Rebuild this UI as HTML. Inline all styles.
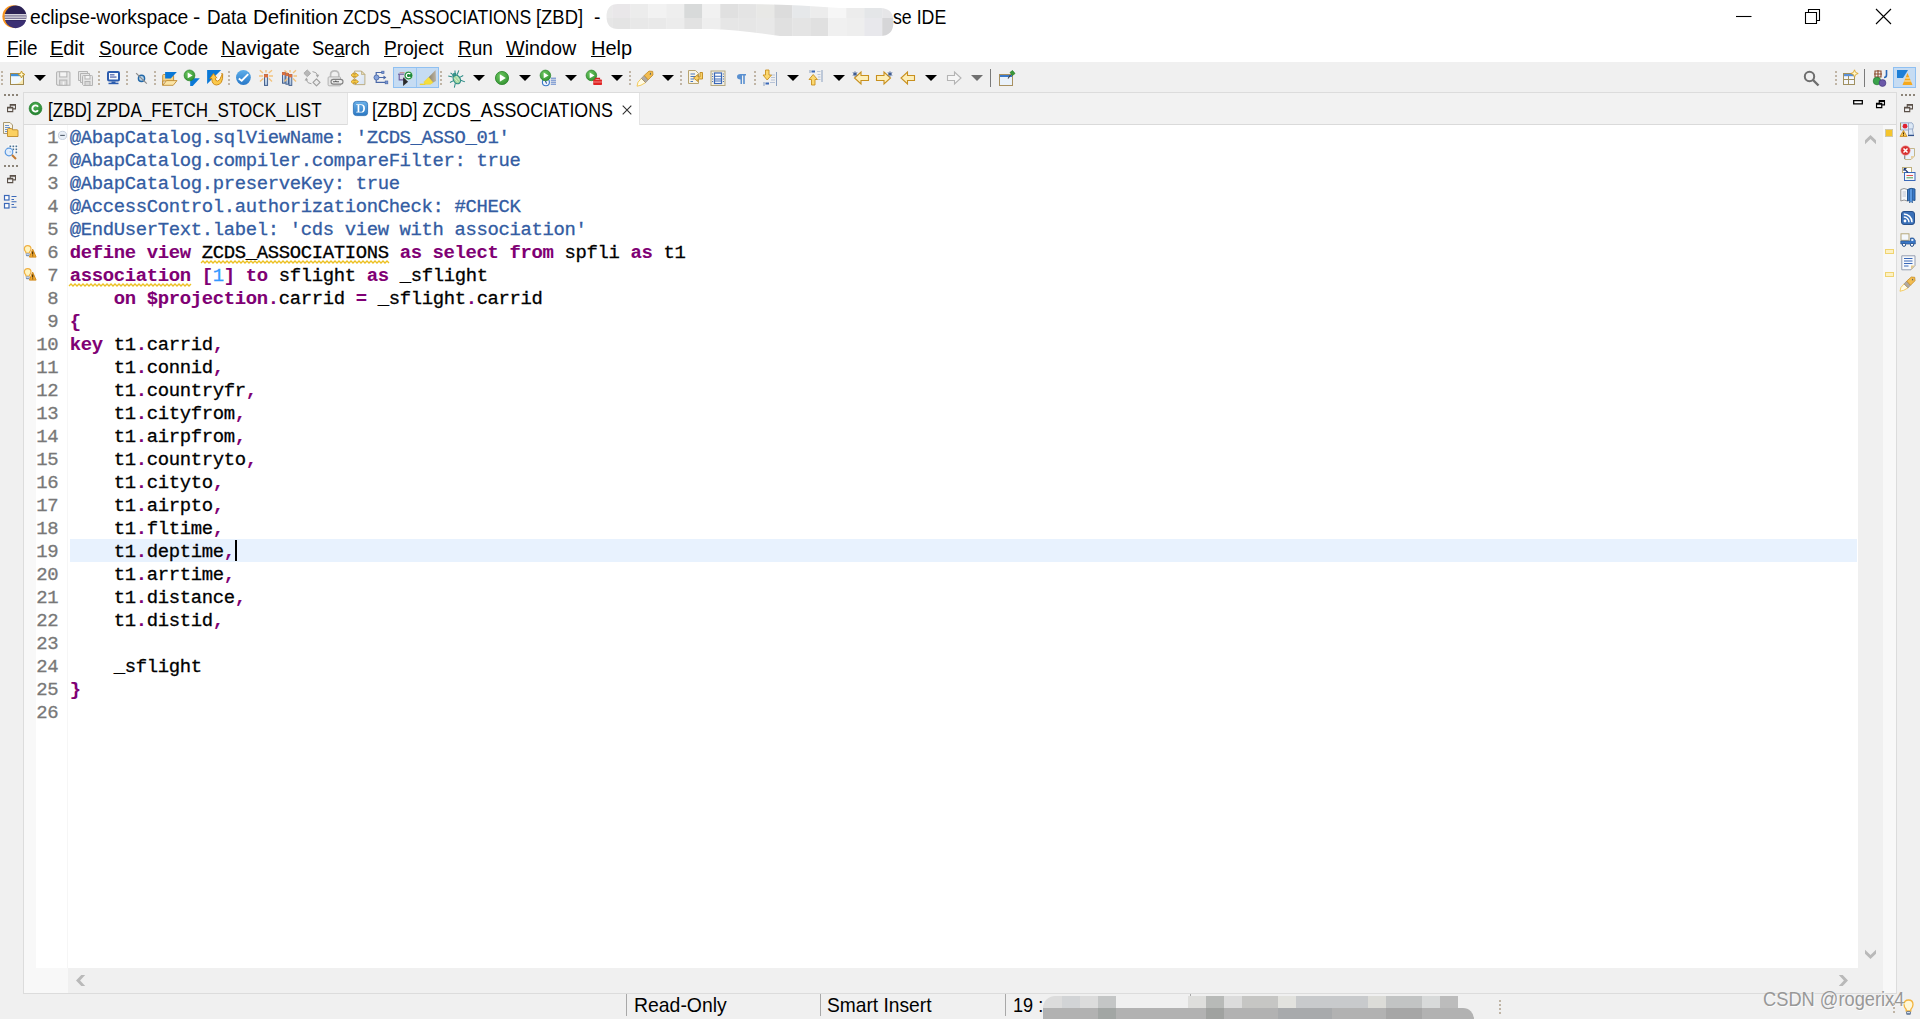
<!DOCTYPE html>
<html>
<head>
<meta charset="utf-8">
<title>eclipse-workspace</title>
<style>
html,body{margin:0;padding:0;}
body{width:1920px;height:1019px;overflow:hidden;background:#f0f0f0;position:relative;font-family:"Liberation Sans",sans-serif;color:#000;}
.abs{position:absolute;}
#titlebar{left:0;top:0;width:1920px;height:32px;background:#fff;}
#menubar{left:0;top:32px;width:1920px;height:30px;background:#fff;}
.ui{position:absolute;white-space:pre;font-size:20.4px;line-height:22px;height:22px;color:#000;transform-origin:0 50%;display:inline-block;}
.ui u{text-decoration:underline;text-decoration-thickness:1px;text-underline-offset:0.5px;}
#toolbar{left:0;top:62px;width:1920px;height:30px;background:#f0f0f0;}
#part{left:23px;top:92px;width:1874px;height:902px;background:#f2f2f2;border:1px solid #dcdcdc;box-sizing:border-box;}
#editor{left:24px;top:125px;width:1834px;height:843px;background:#fff;}
#tabline{left:24px;top:124px;width:1872px;height:1px;background:#dadada;}
#annot{left:24px;top:125px;width:12px;height:868px;background:#f8f8f8;}
#acttab{left:347px;top:93px;width:293px;height:32px;background:#fff;border-left:1px solid #e4e4e4;border-right:1px solid #e4e4e4;box-sizing:border-box;}
#lnsep{left:67px;top:125px;width:1px;height:843px;background:#f6f6f6;}
#curline{left:70px;top:539px;width:1787px;height:23px;background:#e8f2fe;}
#caret{left:235px;top:540px;width:2px;height:21px;background:#000;}
#vscroll{left:1858px;top:125px;width:25px;height:843px;background:#f0f0f0;}
#ovr{left:1883px;top:125px;width:13px;height:868px;background:#f8f8f8;}
#hscroll{left:68px;top:968px;width:1815px;height:25px;background:#f0f0f0;}
#hsl{left:36px;top:968px;width:32px;height:25px;background:#f8f8f8;}
.code{position:absolute;left:69.8px;top:127px;margin:0;font-family:"Liberation Mono",monospace;font-size:18.9px;letter-spacing:-0.342px;line-height:23px;white-space:pre;color:#000;-webkit-text-stroke:0.3px currentColor;}
.ln{position:absolute;left:30px;width:28.3px;top:127px;margin:0;text-align:right;font-family:"Liberation Mono",monospace;font-size:18.9px;letter-spacing:-0.342px;line-height:23px;white-space:pre;color:#787878;-webkit-text-stroke:0.3px currentColor;}
.an{color:#335ca2;}
.kw{color:#7f0074;font-weight:bold;-webkit-text-stroke:0.1px currentColor;}
.nu{color:#3399ff;}
.ic{position:absolute;display:block;overflow:visible;}
.dd{position:absolute;top:75px;width:0;height:0;border-left:6px solid transparent;border-right:6px solid transparent;border-top:6.5px solid #000;}
.hd{position:absolute;top:71px;width:2px;height:15px;background:repeating-linear-gradient(to bottom,#c0b5a6 0,#c0b5a6 2px,transparent 2px,transparent 4px);}
.hh{position:absolute;height:2px;width:15px;background:repeating-linear-gradient(to right,#8c8478 0,#8c8478 2px,transparent 2px,transparent 4px);}
/*FIT*/
#t1a{left:30.45px !important;transform:scaleX(0.9435);}
#t1b{left:193.20px !important;transform:scaleX(1.0740);}
#t1c{left:206.72px !important;transform:scaleX(0.9227);}
#t1d{left:252.67px !important;transform:scaleX(1.0005);}
#t1e{left:342.70px !important;transform:scaleX(0.8622);}
#t1f{left:535.93px !important;transform:scaleX(0.9028);}
#t1g{left:594.45px !important;transform:scaleX(0.9416);}
#t2{left:892.70px !important;transform:scaleX(0.8699);}
#m1{left:7.05px !important;transform:scaleX(0.9255);}
#m2{left:50.13px !important;transform:scaleX(0.9764);}
#m3{left:98.69px !important;transform:scaleX(0.9159);}
#m4{left:221.19px !important;transform:scaleX(0.9785);}
#m5{left:312.44px !important;transform:scaleX(0.8978);}
#m6{left:384.26px !important;transform:scaleX(0.9400);}
#m7{left:458.22px !important;transform:scaleX(0.9281);}
#m8{left:506.21px !important;transform:scaleX(0.9685);}
#m9{left:591.14px !important;transform:scaleX(0.9786);}
#tab1{left:47.95px !important;transform:scaleX(0.8364);}
#tab2{left:371.95px !important;transform:scaleX(0.8727);}
#s1{left:634.42px !important;transform:scaleX(0.9516);}
#s2{left:827.21px !important;transform:scaleX(0.9411);}
#s3{left:1013.25px !important;transform:scaleX(0.8878);}
#wm{left:1762.85px !important;transform:scaleX(0.9135);}
/*ENDFIT*/
</style>
</head>
<body>
<div id="titlebar" class="abs"></div>
<div id="menubar" class="abs"></div>
<div id="toolbar" class="abs"></div>
<div id="part" class="abs"></div>
<div id="editor" class="abs"></div>
<div id="tabline" class="abs"></div>
<div id="acttab" class="abs"></div>
<div id="annot" class="abs"></div>
<div id="lnsep" class="abs"></div>
<div id="curline" class="abs"></div>
<div id="vscroll" class="abs"></div>
<div id="ovr" class="abs"></div>
<div id="hscroll" class="abs"></div>
<div id="hsl" class="abs"></div>

<!--I1-->
<!-- TITLE ICON + CONTROLS -->
<svg class="ic" style="left:1px;top:4px;" width="27" height="25" viewBox="0 0 27 25">
  <circle cx="12.6" cy="12.5" r="11.2" fill="#f7941e"/>
  <circle cx="14.6" cy="12.5" r="10.9" fill="#2c2255"/>
  <rect x="3.6" y="10.2" width="21.8" height="1.3" fill="#fff"/>
  <rect x="3.6" y="12.4" width="21.8" height="1.3" fill="#fff"/>
  <rect x="3.8" y="14.6" width="21.6" height="1.3" fill="#fff"/>
  <path d="M4.2 16.6 H25 A10.9 10.9 0 0 1 4.2 16.6Z" fill="#3b2f73"/>
</svg>
<svg class="ic" style="left:590px;top:0px;" width="310" height="40" viewBox="0 0 310 40">
  <defs><clipPath id="blobc"><path d="M28 4 H154 Q200 4 250 8 H290 Q303.500 8 303.500 22 Q303.500 36 290 36 H190 Q150 30 120 29 H28 Q16.500 29 16.500 16.500 Q16.500 4 28 4Z"/></clipPath></defs>
  <g clip-path="url(#blobc)"><rect x="4.2" y="0" width="18.2" height="18" fill="#eaeaea"/><rect x="4.2" y="18" width="18.2" height="20" fill="#e6e6e6"/><rect x="22.2" y="0" width="18.2" height="18" fill="#e9e7e9"/><rect x="22.2" y="18" width="18.2" height="20" fill="#e4e4e4"/><rect x="40.2" y="0" width="18.2" height="18" fill="#ececec"/><rect x="40.2" y="18" width="18.2" height="20" fill="#e8e8e8"/><rect x="58.2" y="0" width="18.2" height="18" fill="#f2f2f2"/><rect x="58.2" y="18" width="18.2" height="20" fill="#e9e9e9"/><rect x="76.2" y="0" width="18.2" height="18" fill="#eeeeee"/><rect x="76.2" y="18" width="18.2" height="20" fill="#ececec"/><rect x="94.2" y="0" width="18.2" height="18" fill="#d8dada"/><rect x="94.2" y="18" width="18.2" height="20" fill="#e2e2e2"/><rect x="112.2" y="0" width="18.2" height="18" fill="#f1f1f1"/><rect x="112.2" y="18" width="18.2" height="20" fill="#eeeeee"/><rect x="130.2" y="0" width="18.2" height="18" fill="#e0e0e0"/><rect x="130.2" y="18" width="18.2" height="20" fill="#e6e6e6"/><rect x="148.2" y="0" width="18.2" height="18" fill="#e4e4e4"/><rect x="148.2" y="18" width="18.2" height="20" fill="#e6e6e6"/><rect x="166.2" y="0" width="18.2" height="18" fill="#e8e8e6"/><rect x="166.2" y="18" width="18.2" height="20" fill="#e8e8e8"/><rect x="184.2" y="0" width="18.2" height="18" fill="#dcdcdc"/><rect x="184.2" y="18" width="18.2" height="20" fill="#e0e0e0"/><rect x="202.2" y="0" width="18.2" height="18" fill="#e6e8ea"/><rect x="202.2" y="18" width="18.2" height="20" fill="#e4e4e4"/><rect x="220.2" y="0" width="18.2" height="18" fill="#ececec"/><rect x="220.2" y="18" width="18.2" height="20" fill="#e0e0e0"/><rect x="238.2" y="0" width="18.2" height="18" fill="#f6f6f6"/><rect x="238.2" y="18" width="18.2" height="20" fill="#f0f0f0"/><rect x="256.2" y="0" width="18.2" height="18" fill="#ececec"/><rect x="256.2" y="18" width="18.2" height="20" fill="#eeeeee"/><rect x="274.2" y="0" width="18.2" height="18" fill="#e4e6e8"/><rect x="274.2" y="18" width="18.2" height="20" fill="#e8e8ec"/><rect x="292.2" y="0" width="18.2" height="18" fill="#e6e6e8"/><rect x="292.2" y="18" width="18.2" height="20" fill="#d6d6d8"/></g>
</svg>
<svg class="ic" style="left:1730px;top:4px;" width="170" height="24" viewBox="0 0 170 24" fill="none" stroke="#000" stroke-width="1.1">
  <path d="M6 12.5 H21.5"/>
  <path d="M75.5 8.5 H86.5 V19.5 H75.5Z M78.5 8.5 V5.5 H89.5 V16.5 H86.5"/>
  <path d="M146 5 L161 20 M161 5 L146 20"/>
</svg>
<!--/I1-->
<!--I2-->
<!-- TOOLBAR ICONS -->
<div class="hd" style="left:1px"></div>
<svg class="ic" style="left:9px;top:70px;" width="16" height="16" viewBox="0 0 16 16">
  <rect x="1.5" y="3.5" width="13" height="11" fill="#f0f8fe" stroke="#a08a50"/>
  <rect x="2" y="4" width="12" height="2.2" fill="#3f8fd8"/>
  <path d="M5 14 Q12.5 13.5 14 8 V14Z" fill="#f8e8b0"/>
  <path d="M12.5 1 L13.6 3.4 L16 4.5 L13.6 5.6 L12.5 8 L11.4 5.6 L9 4.5 L11.4 3.4Z" fill="#fff6c8" stroke="#c89820" stroke-width=".9"/>
</svg>
<div class="dd" style="left:34px"></div>
<svg class="ic" style="left:54.5px;top:70px;" width="16.5" height="17" viewBox="0 0 16 16" fill="none" stroke="#b4b4b4">
  <path d="M1.5 2.5 Q1.5 1.5 2.5 1.5 H13.5 Q14.5 1.5 14.5 2.5 V14.5 H2.5 L1.5 13.5Z" fill="#e6e6e6"/>
  <rect x="4.5" y="1.5" width="7" height="5" fill="#f4f4f4"/>
  <rect x="4.5" y="9.5" width="7" height="5" fill="#d8d8d8"/>
  <rect x="7.5" y="11" width="1.5" height="3" fill="#f4f4f4" stroke="none"/>
</svg>
<svg class="ic" style="left:77px;top:70px;" width="17" height="17" viewBox="0 0 17 17" fill="#e6e6e6" stroke="#b4b4b4">
  <path d="M1.5 1.5 H10.5 V10.5 H1.5Z"/>
  <path d="M3.5 3.5 H12.5 V12.5 H3.5Z"/>
  <path d="M5.5 6.5 Q5.5 5.5 6.5 5.5 H14.5 Q15.5 5.5 15.5 6.5 V15.5 H6.5 L5.5 14.5Z"/>
  <rect x="8" y="5.5" width="5" height="3.5" fill="#f4f4f4"/>
  <rect x="8" y="11.5" width="5" height="4" fill="#d8d8d8"/>
</svg>
<div class="hd" style="left:98px"></div>
<svg class="ic" style="left:106px;top:70px;" width="16" height="16" viewBox="0 0 16 16">
  <rect x="2" y="2" width="11" height="8.6" rx="1" fill="#f6f9fd" stroke="#2c5cae" stroke-width="2"/>
  <rect x="4" y="4.3" width="4.5" height="1.1" fill="#3a50a0"/>
  <rect x="4" y="6.5" width="6.5" height="1.1" fill="#3a50a0"/>
  <rect x="5.5" y="11.5" width="4" height="1.5" fill="#2c5cae"/>
  <rect x="2.5" y="12.7" width="10" height="1.5" fill="#2c5cae"/>
</svg>
<div class="hd" style="left:126px"></div>
<svg class="ic" style="left:134px;top:70px;" width="16" height="16" viewBox="0 0 16 16" fill="none">
  <circle cx="7.5" cy="8.4" r="3.1" stroke="#2268a8" stroke-width="1.4" fill="#b9d4ea"/>
  <path d="M2.1 3.1 L12.8 13.6" stroke="#8c8c8c" stroke-width="1.2"/>
</svg>
<div class="hd" style="left:154px"></div>
<svg class="ic" style="left:162px;top:70px;" width="16" height="16" viewBox="0 0 16 16">
  <path d="M0.7 15.3 V5.4 Q0.7 4.5 1.6 4.5 H5 L6 5.6 H11.6 V11 H0.7Z" fill="#f7d58a" stroke="#c08a30" stroke-width=".9"/>
  <path d="M3.1 2.1 H14.9 L8.7 8.6 H3.1Z" fill="#0a78d6"/>
  <path d="M0.8 15.3 L4.5 10.6 H15 L11.2 15.3Z" fill="#fbe4a6" stroke="#c08a30" stroke-width=".9"/>
</svg>
<svg class="ic" style="left:183px;top:69px;" width="18" height="18" viewBox="0 0 18 18">
  <defs><radialGradient id="gp1" cx=".4" cy=".35" r=".8"><stop offset="0" stop-color="#6cc860"/><stop offset="1" stop-color="#2a8a2a"/></radialGradient></defs>
  <path d="M7.2 9.2 H16.8 L9.7 17 H7.2Z" fill="#0a78d6"/>
  <circle cx="6.5" cy="6.4" r="5.4" fill="url(#gp1)" stroke="#2a842a" stroke-width=".7"/>
  <path d="M4.7 3.5 L9.6 6.4 L4.7 9.3Z" fill="#fff"/>
</svg>
<svg class="ic" style="left:206px;top:69px;" width="18" height="18" viewBox="0 0 18 18">
  <path d="M1.1 1.1 H15.1 L1.1 15Z" fill="#0a78d6"/>
  <path d="M3.8 9.6 L7.5 4.6 L11.2 9.6 H9.3 Q9.4 12 11.5 12 Q14.8 11.5 15.6 4.6 L16.7 4.8 Q17.3 15.8 10.5 16 Q5.8 15.8 5.8 9.6Z" fill="#fbc94a" stroke="#c8820e" stroke-width=".9"/>
  <path d="M10.2 9.4 L11.6 10.5 L15.2 5" fill="none" stroke="#fff" stroke-width="1.2"/>
</svg>
<div class="hd" style="left:228px"></div>
<svg class="ic" style="left:236px;top:70px;" width="16" height="16" viewBox="0 0 16 16">
  <defs><linearGradient id="gc1" x1="0" y1="0" x2="0" y2="1"><stop offset="0" stop-color="#5eaeea"/><stop offset="1" stop-color="#2878c8"/></linearGradient></defs>
  <circle cx="7.4" cy="7.5" r="7.4" fill="url(#gc1)"/>
  <path d="M2.8 8.4 L5.7 10.7 L12.2 4.2" fill="none" stroke="#fff" stroke-width="1.9"/>
</svg>
<svg class="ic" style="left:258px;top:69px;" width="16" height="18" viewBox="0 0 16 18">
  <defs><linearGradient id="gw1" x1="0" y1="0" x2="0" y2="1"><stop offset="0" stop-color="#e8eef6"/><stop offset="1" stop-color="#a8c0dc"/></linearGradient></defs>
  <g stroke="#f2c27c" stroke-width="1.4"><path d="M8 1 V3.6 M1.8 1.3 L5 4 M14 1.3 L10.8 4 M1 7 H5 M11 7 H15 M2 12.5 L5.3 9.5 M14 12.5 L11 9.5"/></g>
  <rect x="6.5" y="5.6" width="3.1" height="10.8" fill="url(#gw1)" stroke="#3a5888" stroke-width=".9"/>
  <rect x="6.1" y="5.2" width="3.9" height="3.2" fill="#e0703a"/>
</svg>
<svg class="ic" style="left:281px;top:69px;" width="17" height="18" viewBox="0 0 17 18">
  <g stroke="#f2c27c" stroke-width="1.4"><path d="M9 1 V3.6 M3.5 1.5 L6.5 4 M15 1.3 L12 4 M12.500 7 H16 M15 12.500 L12 9.500"/></g>
  <rect x="1.5" y="3.5" width="2.6" height="10.7" fill="url(#gw1)" stroke="#3a5888" stroke-width=".9"/><rect x="1.1" y="3.1" width="3.4" height="3" fill="#e0703a"/>
  <rect x="4.900" y="4.500" width="2.6" height="10.700" fill="url(#gw1)" stroke="#3a5888" stroke-width=".9"/><rect x="4.500" y="4.100" width="3.4" height="3" fill="#e0703a"/>
  <rect x="8" y="5.600" width="2.8" height="10.800" fill="url(#gw1)" stroke="#3a5888" stroke-width=".9"/><rect x="7.600" y="5.200" width="3.6" height="3.200" fill="#e0703a"/>
  <path d="M3.500 12.500 L6.500 9.500" stroke="#f2c27c" stroke-width="1.4"/>
</svg>
<svg class="ic" style="left:303px;top:69px;" width="18" height="18" viewBox="0 0 18 18" fill="none" stroke="#a4a4a4">
  <path d="M4.250 1 L7.600 4.300 L4.250 7.600 L0.900 4.300Z" fill="#b8b8b8" stroke="#a8a8a8" stroke-linejoin="round"/>
  <path d="M13.500 9.900 L17 13.400 L13.500 16.900 L10 13.400Z" fill="#ececec" stroke="#a0a0a0" stroke-width="1.200" stroke-linejoin="round"/>
  <path d="M9.500 2.600 Q13.800 3 14.500 6.200" stroke-width="1"/>
  <path d="M12.700 5.800 H16.300 L14.500 8.800Z" fill="#a4a4a4" stroke="none"/>
  <path d="M8.500 14.800 Q4.200 14.400 3.400 11.200" stroke-width="1"/>
  <path d="M1.600 11.500 H5.200 L3.400 8.500Z" fill="#a4a4a4" stroke="none"/>
</svg>
<svg class="ic" style="left:327px;top:69px;" width="17" height="18" viewBox="0 0 17 18" fill="none">
  <path d="M3.600 8 V5.600 Q3.600 1.900 7.700 1.900 Q11.800 1.900 11.800 5.600 V8" stroke="#bcbcbc" stroke-width="1.700"/>
  <rect x="1.100" y="7.900" width="12.500" height="8.900" rx="1" fill="#e6e6e6" stroke="#b2b2b2"/>
  <rect x="4" y="10.400" width="12" height="4.700" rx="2.300" fill="#ededed" stroke="#808080" stroke-width="1.100"/>
  <path d="M6 12.800 H8 L8.800 12 L9.600 12.800 H12" stroke="#606060" stroke-width="1.100"/>
</svg>
<svg class="ic" style="left:350px;top:70px;" width="16" height="16" viewBox="0 0 16 16">
  <defs><linearGradient id="gd1" x1="0" y1="0" x2="1" y2="1"><stop offset="0" stop-color="#f4f8fd"/><stop offset="1" stop-color="#d6e2f2"/></linearGradient></defs>
  <path d="M4.500 1.100 H11.500 L14.900 4.500 V14.600 H4.500Z" fill="url(#gd1)" stroke="#b8a878" stroke-width=".9"/>
  <path d="M11.500 1.100 V4.500 H14.900Z" fill="#e8dcb8" stroke="#b8a878" stroke-width=".7"/>
  <path d="M1 5.200 L3.500 2.800 V4.200 H5.500 V2.800 L8.500 5.200 L5.500 7.600 V6.200 H3.500 V7.600Z" fill="#f6cc48" stroke="#c89018" stroke-width=".8" stroke-linejoin="round"/>
  <path d="M1 11.700 L3.500 9.300 V10.700 H5.500 V9.300 L8.500 11.700 L5.500 14.100 V12.700 H3.500 V14.100Z" fill="#f6cc48" stroke="#c89018" stroke-width=".8" stroke-linejoin="round"/>
</svg>
<svg class="ic" style="left:373px;top:70px;" width="16" height="16" viewBox="0 0 16 16" fill="none" stroke="#4a68a8" stroke-width="1.2">
  <path d="M3.2 5 V2.5 H9 M3.2 10 V12.3 H12.5 M6 7.5 H11"/>
  <path d="M10.5 5.4 L13.4 7.5 L10.5 9.6Z" fill="#4a68a8" stroke="none"/>
  <circle cx="3.5" cy="7.5" r="2.5" fill="#86a4dc" stroke="#4a68a8" stroke-width=".9"/>
  <rect x="8.7" y="1.2" width="2.3" height="2.4" fill="#7a98d4" stroke="#4a68a8" stroke-width=".7"/>
  <rect x="12.2" y="11" width="2.6" height="2.8" fill="#7a98d4" stroke="#4a68a8" stroke-width=".7"/>
</svg>
<div class="abs" style="left:393px;top:67px;width:46px;height:21px;background:#c6dcf3;border:1px solid #8fc0f2;box-sizing:border-box;"></div>
<div class="abs" style="left:415.5px;top:68px;width:1px;height:19px;background:#9ac6f2;"></div>
<svg class="ic" style="left:397px;top:70px;" width="17" height="17" viewBox="0 0 17 17">
  <path d="M2.2 4.2 V9.9 H8 V4.2" fill="#d8d4ea" stroke="#6a5a9a" stroke-width="1.1"/>
  <path d="M1 4.2 H9.2" stroke="#6a5a9a" stroke-width="1.1"/>
  <path d="M2.6 2.7 H7.6" stroke="#c48a8a" stroke-width="1.1"/>
  <path d="M6.1 7.2 V16 L11.1 11.7Z" fill="#2c2c2c"/>
  <circle cx="11.5" cy="5.5" r="4.3" fill="#1e8a3a" stroke="#e4f2e4" stroke-width=".6"/>
  <path d="M13.3 4.2 A2.2 2.2 0 1 0 13.3 6.8" fill="none" stroke="#fff" stroke-width="1.3"/>
</svg>
<svg class="ic" style="left:419px;top:69px;" width="18" height="18" viewBox="0 0 18 18">
  <defs><linearGradient id="gh1" x1="0" y1="0" x2="1" y2="0"><stop offset="0" stop-color="#8e866e"/><stop offset="1" stop-color="#bab2a2"/></linearGradient></defs>
  <path d="M16.6 1 L9.6 8.2 L13.6 13.8 L17 12Z" fill="url(#gh1)"/>
  <path d="M9.6 8.2 L14 13.6 L11.3 15.3 H5.9 L4.9 12.9Z" fill="#f6de3c" stroke="#ecd030" stroke-width=".5"/>
  <path d="M0.8 15.3 H6.2" stroke="#f0d428" stroke-width="1.3"/>
</svg>
<div class="hd" style="left:440px"></div>
<svg class="ic" style="left:448px;top:70px;" width="17" height="17" viewBox="0 0 17 17" fill="none" stroke="#2a8a84" stroke-width="1">
  <g transform="rotate(-28 8.5 8.8)">
  <path d="M6 5.5 L2.5 2.5 M11 5.5 L14.500 2.500 M5 9 H1 M12 9 H16 M5.500 12 L2.500 15.500 M11.500 12 L14.500 15.500 M7 3 L6 0.800 M10 3 L11 0.800"/>
  <ellipse cx="8.5" cy="9.5" rx="3.4" ry="4.6" fill="#a6d8a2" stroke="#2a8a84" stroke-width="1.1"/>
  <path d="M7 7 L8 12 M9.500 6.500 L10.300 11.500" stroke="#d8f0d0" stroke-width=".8"/>
  <ellipse cx="8.500" cy="4.200" rx="1.800" ry="1.300" fill="#3a9a8a" stroke="#2a8a84"/>
  </g>
</svg>
<div class="dd" style="left:473px"></div>
<svg class="ic" style="left:494px;top:70px;" width="16" height="16" viewBox="0 0 16 16">
  <circle cx="8" cy="8" r="6.600" fill="url(#gp1)" stroke="#2a842a" stroke-width=".8"/>
  <path d="M5.800 4.200 L11.800 8 L5.800 11.800Z" fill="#fff"/>
</svg>
<div class="dd" style="left:519px"></div>
<svg class="ic" style="left:540px;top:70px;" width="17" height="18" viewBox="0 0 17 18">
  <circle cx="5.9" cy="12.3" r="3.5" fill="#f2f7fd" stroke="#3a78c8" stroke-width="1.1"/>
  <path d="M5.4 10.8 L6.6 13.6" stroke="#2a50a0" fill="none" stroke-width="1.1"/>
  <path d="M10.8 8.2 H16 M10.8 10.2 H16 M10.8 12.2 H16 M10.8 14.2 H16" stroke="#5a80c8" stroke-width="1"/>
  <circle cx="5.4" cy="5.400" r="5.300" fill="url(#gp1)" stroke="#2a842a" stroke-width=".7"/>
  <path d="M3.700 2.600 L8.500 5.400 L3.700 8.200Z" fill="#fff"/>
</svg>
<div class="dd" style="left:565px"></div>
<svg class="ic" style="left:586px;top:70px;" width="17" height="18" viewBox="0 0 17 18">
  <circle cx="5.4" cy="5.400" r="5.300" fill="url(#gp1)" stroke="#2a842a" stroke-width=".7"/>
  <path d="M3.700 2.600 L8.500 5.400 L3.700 8.200Z" fill="#fff"/>
  <path d="M9.500 9.600 V8.400 H13.500 V9.600" fill="none" stroke="#d02020" stroke-width="1.200"/>
  <rect x="7.200" y="9.600" width="8.800" height="5.500" rx=".8" fill="#e02424"/>
  <path d="M7.200 12 H16" stroke="#f8b0b0" stroke-width=".7"/>
</svg>
<div class="dd" style="left:611px"></div>
<div class="hd" style="left:629px"></div>
<svg class="ic" style="left:636px;top:70px;" width="18" height="17" viewBox="0 0 18 17">
  <path d="M5.4 8.4 L9.6 12.6 L5 15.2 L1 16.2 L2 12.2Z" fill="#fffbe6" stroke="#f2c44c" stroke-width=".9"/>
  <path d="M5.4 8.4 L8.2 5.4 L12.2 9.8 L9.6 12.6Z" fill="#b0aaa4" stroke="#8a7a60" stroke-width=".6"/>
  <path d="M8.2 5.4 L13 1.1 L16.7 1.4 L17 5 L12.2 9.8Z" fill="#f2bc50" stroke="#c48a22" stroke-width=".8"/>
  <path d="M14.4 2.6 L15.2 4.4 L13.6 4.4Z" fill="#30507a"/>
</svg>
<div class="dd" style="left:662px"></div>
<div class="hd" style="left:680px"></div>
<svg class="ic" style="left:688px;top:69px;" width="16" height="17" viewBox="0 0 16 17">
  <path d="M0.5 1.5 H7.5 L10.5 4.5 V14.5 H0.5Z" fill="#f8f4e8" stroke="#b8a470"/>
  <path d="M2.5 5 H7 M2.5 7.5 H8 M2.5 10 H6 M2.5 12.5 H5" stroke="#4a78c0" stroke-width="1.1"/>
  <path d="M12 3.5 H14.5 V10 H10 V12.5 L5.5 9 L10 5.5 V8 H12Z" fill="#f8d068" stroke="#c08a20" stroke-width=".9"/>
</svg>
<svg class="ic" style="left:710px;top:70px;" width="16" height="17" viewBox="0 0 16 17">
  <rect x="1" y="1" width="14" height="14.5" fill="#f4f0e4" stroke="#b4a880"/>
  <rect x="4.5" y="3" width="7" height="10.5" fill="#fff" stroke="#3a68b8" stroke-width="1.2"/>
  <path d="M5 6.2 H11 M5 9 H11 M5 11 H11" stroke="#3a68b8" stroke-width="1.1"/>
  <path d="M2.6 3.5 V13.5 M13.4 3.5 V13.5" stroke="#3a68b8" stroke-width="1" stroke-dasharray="1 1.5"/>
</svg>
<svg class="ic" style="left:736px;top:73px;" width="11" height="12" viewBox="0 0 11 12">
  <path d="M4.5 6.5 Q1 6.5 1 3.8 Q1 1 4.5 1 H10 V2.5 H8.8 V11 H7.2 V2.5 H6 V11 H4.5Z" fill="#5a90d0"/>
</svg>
<div class="hd" style="left:754px"></div>
<svg class="ic" style="left:762px;top:69px;" width="16" height="18" viewBox="0 0 16 18">
  <path d="M14.5 3 V17" stroke="#8aa0c0" stroke-width="1"/>
  <path d="M9 6 H13 M9 8.5 H13 M9 11 H13 M8 13.5 H13" stroke="#b8c4d8" stroke-width="1"/>
  <path d="M2 13 V17" stroke="#8aa0c0"/><rect x="3.5" y="13.5" width="3.5" height="2" fill="#3a68b8"/>
  <path d="M3.5 1 H7 V6 H9.5 L5.2 11 L1 6 H3.5Z" fill="#fbd870" stroke="#c8901e" stroke-width=".9"/>
</svg>
<div class="dd" style="left:787px"></div>
<svg class="ic" style="left:808px;top:69px;" width="16" height="18" viewBox="0 0 16 18">
  <path d="M14 1 V13 M2 1 V4" stroke="#8aa0c0" stroke-width="1"/>
  <rect x="3.5" y="1.5" width="3.5" height="2" fill="#3a68b8"/>
  <path d="M9 2.5 H12.5 M9.5 5.5 H12.5 M10 8 H12.5 M10 10.5 H12.5" stroke="#b8c4d8" stroke-width="1"/>
  <path d="M3.5 16 H7 V10.5 H9.5 L5.2 5.5 L1 10.5 H3.5Z" fill="#fbd870" stroke="#c8901e" stroke-width=".9"/>
</svg>
<div class="dd" style="left:833px"></div>
<svg class="ic" style="left:852px;top:71px;" width="18" height="14" viewBox="0 0 18 14">
  <path d="M9 1 V4.5 H16.5 V9.5 H9 V13 L2.5 7Z" fill="#fdeeb8" stroke="#c8901e" stroke-width="1.1"/>
  <path d="M3 0.5 V5.5 M0.8 1.7 L5.2 4.3 M5.2 1.7 L0.8 4.3" stroke="#30508a" stroke-width="1"/>
</svg>
<svg class="ic" style="left:875px;top:71px;" width="18" height="14" viewBox="0 0 18 14">
  <path d="M9 1 V4.5 H1.5 V9.5 H9 V13 L15.5 7Z" fill="#fdeeb8" stroke="#c8901e" stroke-width="1.1"/>
  <path d="M15 0.5 V5.5 M12.8 1.7 L17.2 4.3 M17.2 1.7 L12.8 4.3" stroke="#30508a" stroke-width="1"/>
</svg>
<svg class="ic" style="left:900px;top:71px;" width="16" height="14" viewBox="0 0 16 14">
  <path d="M7.5 1 V4.5 H14.5 V9.5 H7.5 V13 L1 7Z" fill="#fdeeb8" stroke="#c8901e" stroke-width="1.1"/>
</svg>
<div class="dd" style="left:925px"></div>
<svg class="ic" style="left:946px;top:71px;" width="16" height="14" viewBox="0 0 16 14">
  <path d="M8.5 1 V4.5 H1.5 V9.5 H8.5 V13 L15 7Z" fill="#f6f6f6" stroke="#b4b4b4" stroke-width="1.1"/>
</svg>
<div class="dd" style="left:971px;border-top-color:#707070"></div>
<div class="abs" style="left:990px;top:69px;width:1px;height:18px;background:#7a7a7a;"></div>
<svg class="ic" style="left:999px;top:70px;" width="18" height="17" viewBox="0 0 18 17">
  <rect x="0.5" y="4.5" width="13" height="11" fill="#eaf2fb" stroke="#a89060"/>
  <rect x="1" y="5" width="12" height="2" fill="#3a78c8"/>
  <path d="M11 2.5 L13.5 0.5 L16 3.5 L13.5 5.5Z" fill="#3a9a3a" stroke="#207a20" stroke-width=".7"/>
  <path d="M11.5 5 L9 8.5" stroke="#404040" stroke-width="1.1"/>
</svg>
<!-- right toolbar -->
<svg class="ic" style="left:1803px;top:70px;" width="17" height="17" viewBox="0 0 17 17" fill="none" stroke="#6e6e6e">
  <circle cx="6.5" cy="6.5" r="4.7" stroke-width="2"/>
  <path d="M10 10 L15.5 15.5" stroke-width="2.4"/>
</svg>
<div class="hd" style="left:1835px"></div>
<svg class="ic" style="left:1842px;top:69px;" width="17" height="17" viewBox="0 0 17 17">
  <rect x="1.5" y="4.5" width="11" height="11" fill="#f4f6fa" stroke="#a09060"/>
  <rect x="2" y="5" width="10" height="2.2" fill="#5a90d8"/>
  <path d="M2 10.5 H12 M6.5 7 V15" stroke="#a09060"/>
  <path d="M12.5 0.8 L13.6 3.4 L16.2 4.5 L13.6 5.6 L12.5 8.2 L11.4 5.6 L8.8 4.5 L11.4 3.4Z" fill="#fff6c8" stroke="#d8a020" stroke-width=".8"/>
</svg>
<div class="abs" style="left:1864px;top:69px;width:1px;height:18px;background:#7a7a7a;"></div>
<svg class="ic" style="left:1872px;top:69px;" width="17" height="18" viewBox="0 0 17 18">
  <path d="M3 2 H9 V8 H3Z M6 1 V9 M2 5 H10" fill="none" stroke="#8a4a2a" stroke-width="1.1"/>
  <path d="M14.5 1 V6 Q14.5 8.5 12 8.5" fill="none" stroke="#2a68b8" stroke-width="1.6"/>
  <circle cx="5" cy="12" r="3.8" fill="#3aa34a" stroke="#207a30" stroke-width=".7"/>
  <circle cx="10.5" cy="14" r="3.4" fill="#6a58a8" stroke="#483a80" stroke-width=".7"/>
</svg>
<div class="abs" style="left:1893px;top:67px;width:23px;height:21px;background:#c6dcf3;border:1px solid #8fc0f2;box-sizing:border-box;"></div>
<svg class="ic" style="left:1896px;top:69px;" width="18" height="17" viewBox="0 0 18 17">
  <path d="M1 1 H12 L7 9 H1Z" fill="#1e7fd6"/>
  <path d="M11.5 4 L16.5 16 H6.5Z" fill="#f5a81e"/>
  <path d="M9.3 9 H13.7 M8.2 12 H14.8" stroke="#fdf0c8" stroke-width="1.2"/>
</svg>
<!--/I2-->
<!--I3-->
<!-- LEFT TRIM -->
<div class="hh" style="left:4px;top:94px"></div>
<svg class="ic" style="left:6.5px;top:104px;" width="9" height="8.2" viewBox="0 0 10 9" fill="#f0f0f0" stroke="#5a5048" stroke-width="1.2">
  <path d="M3.6 0.6 H9.4 V5.4 H3.6Z M3.6 1.4 H9.4"/>
  <path d="M0.6 3.6 H6.4 V8.4 H0.6Z M0.6 4.4 H6.4"/>
</svg>
<svg class="ic" style="left:2px;top:121px;" width="17" height="17" viewBox="0 0 17 17">
  <path d="M1.5 1.5 H8 L10.5 4 V12.5 H1.5Z" fill="#f8f4e8" stroke="#a89870"/>
  <path d="M3 4.5 H7 M3 6.5 H8 M3 8.5 H8 M3 10.5 H6" stroke="#5a88c8" stroke-width=".9"/>
  <path d="M5.5 8.5 Q5.5 7.5 6.5 7.5 H9.5 L10.5 8.8 H15 Q16 8.8 16 9.8 V15.5 H5.5Z" fill="#fbd060" stroke="#c08a28" stroke-width=".9"/>
</svg>
<svg class="ic" style="left:4px;top:144px;" width="15" height="16" viewBox="0 0 15 16">
  <rect x="4.5" y="0.5" width="9.5" height="9" fill="#fff"/>
  <g fill="#4a7090"><rect x="5.5" y="1.5" width="1.7" height="1.7"/><rect x="8.5" y="1.5" width="1.7" height="1.7"/><rect x="11.5" y="1.5" width="1.7" height="1.7"/><rect x="8.5" y="4.5" width="1.7" height="1.7"/><rect x="11.5" y="4.5" width="1.7" height="1.7"/><rect x="11.5" y="7.5" width="1.7" height="1.7"/><rect x="5.5" y="7" width="1.7" height="1.7"/></g>
  <circle cx="5" cy="8" r="3.8" fill="rgba(220,235,252,.8)" stroke="#5a98e0" stroke-width="1.2"/>
  <path d="M8 11 L12 15" stroke="#c07830" stroke-width="2"/>
</svg>
<div class="hh" style="left:4px;top:165px"></div>
<svg class="ic" style="left:6.5px;top:175px;" width="9" height="8.2" viewBox="0 0 10 9" fill="#f0f0f0" stroke="#5a5048" stroke-width="1.2">
  <path d="M3.6 0.6 H9.4 V5.4 H3.6Z M3.6 1.4 H9.4"/>
  <path d="M0.6 3.6 H6.4 V8.4 H0.6Z M0.6 4.4 H6.4"/>
</svg>
<svg class="ic" style="left:3px;top:194px;" width="15" height="16" viewBox="0 0 15 16" fill="none" stroke="#3a68b8">
  <rect x="1.5" y="1.5" width="4.5" height="4.5" fill="#fff" stroke-width="1.2"/>
  <rect x="1.5" y="9.5" width="4.5" height="4.5" fill="#fff" stroke-width="1.2"/>
  <path d="M8.5 2.5 H13.5 M8.5 5.5 H11 M8.5 7.8 H13.5 M8.5 10.5 H11 M8.5 13.2 H13.5" stroke-width="1.1"/>
</svg>
<!-- RIGHT TRIM -->
<div class="hh" style="left:1901px;top:94px"></div>
<svg class="ic" style="left:1903.7px;top:104px;" width="9" height="8.2" viewBox="0 0 10 9" fill="#f0f0f0" stroke="#5a5048" stroke-width="1.2">
  <path d="M3.6 0.6 H9.4 V5.4 H3.6Z M3.6 1.4 H9.4"/>
  <path d="M0.6 3.6 H6.4 V8.4 H0.6Z M0.6 4.4 H6.4"/>
</svg>
<svg class="ic" style="left:1899px;top:122px;" width="17" height="16" viewBox="0 0 17 16">
  <path d="M1.5 0.8 H13 Q15.5 3 13.5 8 L14.5 13 H9.5 V8 H1.5Z" fill="#dce8f6" stroke="#8aa0c0" stroke-width=".8"/>
  <path d="M1.5 0.8 V8" stroke="#b09a60"/>
  <path d="M9.5 1 V13 M9.5 7 H14" stroke="#8aa0c0" stroke-width=".8"/>
  <path d="M9 13.5 H15" stroke="#30508a" stroke-width="1.2"/>
  <circle cx="6" cy="4.2" r="2.4" fill="#e02030"/>
  <path d="M1 14.5 L4.5 8.5 L8 14.5Z" fill="#f8c850" stroke="#c88a20" stroke-width=".8"/>
  <path d="M4.5 10.5 V12.5 M4.5 13.2 V13.9" stroke="#402000" stroke-width="1"/>
</svg>
<svg class="ic" style="left:1900px;top:145px;" width="16" height="16" viewBox="0 0 16 16">
  <path d="M5 3.5 H14.5 V11 L11 14.5 H5Z" fill="#eaf1fb" stroke="#c0b080" stroke-width=".9"/>
  <path d="M11 14.5 V11 H14.5Z" fill="#e8d0a0"/>
  <path d="M4 11 H6 M4 13 H6" stroke="#30508a" stroke-width="1.2" stroke-dasharray="1 1"/>
  <circle cx="5.5" cy="5.5" r="4.8" fill="#d83030" stroke="#f0b0b0" stroke-width=".6"/>
  <path d="M3.5 3.5 L7.5 7.5 M7.5 3.5 L3.5 7.5" stroke="#fff" stroke-width="1.5"/>
</svg>
<svg class="ic" style="left:1901px;top:167px;" width="15" height="14" viewBox="0 0 15 14">
  <rect x="1.5" y="0.5" width="9" height="5" fill="#fff" stroke="#b8a870" stroke-width=".9"/>
  <rect x="3.5" y="5.5" width="10.5" height="8" fill="#f4f8fd" stroke="#3a68b8" stroke-width="1"/>
  <path d="M3 1.5 L7 5.5 M3 1.5 V4 M3 1.5 H5.5" stroke="#203a70" stroke-width="1.1" fill="none"/>
  <path d="M5.5 8.5 H12" stroke="#e05050" stroke-width="1"/><path d="M5.5 10.8 H12" stroke="#50a050" stroke-width="1"/>
</svg>
<svg class="ic" style="left:1900px;top:187px;" width="16" height="17" viewBox="0 0 16 17">
  <path d="M0.8 2.5 Q4 0.5 7.5 2.5 V14 Q4 12 0.8 14Z" fill="#f4f6fa" stroke="#8a8a8a" stroke-width=".9"/>
  <path d="M2.5 5 H6 M2.5 7 H6 M2.5 9 H6" stroke="#b0b8c8" stroke-width=".8"/>
  <path d="M7.5 2.5 Q11 0.5 15 2 V13.5 Q11 12 7.5 14Z" fill="#3a78c8" stroke="#20508a" stroke-width=".9"/>
  <path d="M9.5 2 V16 L11 14.5 L12.5 16 V1.5Z" fill="#5a98e0" stroke="#20508a" stroke-width=".6"/>
</svg>
<svg class="ic" style="left:1901px;top:211px;" width="14" height="14" viewBox="0 0 14 14">
  <rect x="0.5" y="0.5" width="13" height="13" rx="2.5" fill="#3a70b8" stroke="#28508a"/>
  <circle cx="4" cy="10" r="1.4" fill="#fff"/>
  <path d="M2.8 6 A5.2 5.2 0 0 1 8 11.2 M2.8 3 A8.2 8.2 0 0 1 11 11.2" fill="none" stroke="#fff" stroke-width="1.5"/>
</svg>
<svg class="ic" style="left:1900px;top:233px;" width="16" height="14" viewBox="0 0 16 14">
  <rect x="1" y="0.8" width="8" height="6.5" fill="#f4f8fd" stroke="#b0a070" stroke-width=".9"/>
  <path d="M0.8 8 H10.5 V5 H13.5 L15.3 7.5 V11 H0.8Z" fill="#3a78c8" stroke="#28508a" stroke-width=".7"/>
  <rect x="11.3" y="6" width="2" height="2" fill="#e0ecfa"/>
  <circle cx="4" cy="11.8" r="1.6" fill="#fff" stroke="#28508a"/><circle cx="12" cy="11.8" r="1.6" fill="#fff" stroke="#28508a"/>
</svg>
<svg class="ic" style="left:1901px;top:255px;" width="15" height="16" viewBox="0 0 15 16">
  <path d="M0.8 0.8 H14 V10.5 L10 14.8 H0.8Z" fill="#f6f8fc" stroke="#8a94a8" stroke-width=".9"/>
  <path d="M10 14.8 V10.5 H14Z" fill="#e0c890"/>
  <path d="M3 3.5 H11.5 M3 6 H11.5 M3 8.5 H11.5 M3 11 H7.5" stroke="#3a68b8" stroke-width="1"/>
</svg>
<svg class="ic" style="left:1899px;top:276px;" width="17" height="16" viewBox="0 0 18 17">
  <path d="M5.4 8.4 L9.6 12.6 L5 15.2 L1 16.2 L2 12.2Z" fill="#fffbe6" stroke="#f2c44c" stroke-width=".9"/>
  <path d="M5.4 8.4 L8.2 5.4 L12.2 9.8 L9.6 12.6Z" fill="#b0aaa4" stroke="#8a7a60" stroke-width=".6"/>
  <path d="M8.2 5.4 L13 1.1 L16.7 1.4 L17 5 L12.2 9.8Z" fill="#f2bc50" stroke="#c48a22" stroke-width=".8"/>
  <path d="M14.4 2.6 L15.2 4.4 L13.6 4.4Z" fill="#30507a"/>
</svg>
<!-- TAB ICONS -->
<svg class="ic" style="left:28px;top:102px;" width="15" height="14" viewBox="0 0 15 14">
  <defs><radialGradient id="gC" cx=".5" cy=".3" r=".8"><stop offset="0" stop-color="#4cb050"/><stop offset="1" stop-color="#1e7a2c"/></radialGradient></defs>
  <circle cx="7.500" cy="6.500" r="6.400" fill="url(#gC)" stroke="#1e7a2a" stroke-width=".6"/>
  <path d="M10 4.700 A3.100 3.100 0 1 0 10 8.300" fill="none" stroke="#fff" stroke-width="1.900"/>
</svg>
<svg class="ic" style="left:353px;top:101px;" width="15" height="15" viewBox="0 0 15 15">
  <defs><linearGradient id="gD" x1="0" y1="0" x2="0" y2="1"><stop offset="0" stop-color="#6ab0e8"/><stop offset="1" stop-color="#2a78c4"/></linearGradient></defs>
  <rect x="0.400" y="0.400" width="14.200" height="14.200" rx="3" fill="url(#gD)" stroke="#2a6cb0" stroke-width=".8"/>
  <path d="M3.200 3.200 H8 Q12 3.200 12 7.400 Q12 11.600 8 11.600 H3.200 V10.800 H4.600 V4 H3.200Z M6.300 4 V10.800 H7.800 Q10.200 10.800 10.200 7.400 Q10.200 4 7.800 4Z" fill="#fff" fill-rule="evenodd"/>
</svg>
<svg class="ic" style="left:622px;top:105px;" width="10" height="10" viewBox="0 0 10 10"><path d="M0.7 0.7 L9.3 9.3 M9.3 0.7 L0.7 9.3" stroke="#303030" stroke-width="1.1"/></svg>
<svg class="ic" style="left:1853px;top:99.7px;" width="10" height="4.5" viewBox="0 0 11 5"><rect x="0.7" y="0.7" width="9.6" height="3.6" fill="#fff" stroke="#000" stroke-width="1.4"/></svg>
<svg class="ic" style="left:1875.5px;top:99.7px;" width="9" height="8.3" viewBox="0 0 10 9" fill="#f2f2f2" stroke="#000" stroke-width="1.3">
  <path d="M3.6 0.6 H9.4 V5.4 H3.6Z M3.6 1.5 H9.4"/>
  <path d="M0.6 3.6 H6.4 V8.4 H0.6Z M0.6 4.5 H6.4"/>
</svg>
<!-- EDITOR DECOR -->
<svg class="ic" style="left:58px;top:131px;" width="9" height="9" viewBox="0 0 9 9"><circle cx="4.5" cy="4.4" r="4.1" fill="#e8eef6" stroke="#bcc6d6" stroke-width=".8"/><path d="M2.2 4.4 H6.800" stroke="#505a68" stroke-width="1.1"/></svg>
<svg class="ic" style="left:24px;top:244.5px;" width="12.5" height="13" viewBox="0 0 12.5 13">
  <path d="M3.7 0.7 Q7 0.7 7 3.9 Q7 5.6 5.6 6.9 V8 H1.8 V6.9 Q0.4 5.6 0.4 3.9 Q0.4 0.7 3.7 0.7Z" fill="#fff4c0" stroke="#f0b040" stroke-width="1.2"/>
  <rect x="1.9" y="8.2" width="3.6" height="3" rx="1" fill="#7a94b8"/>
  <rect x="2.5" y="8.8" width="2.4" height="1" fill="#e0e8f4"/>
  <path d="M5.4 12.1 L8.7 4.2 L12.1 12.1Z" fill="#f2ac34" stroke="#d48c1c" stroke-width="1" stroke-linejoin="round"/>
  <path d="M8.7 6.6 V9.6 M8.7 10.4 V11.2" stroke="#3a2200" stroke-width="1.1"/>
</svg>
<svg class="ic" style="left:24px;top:267.5px;" width="12.5" height="13" viewBox="0 0 12.5 13">
  <path d="M3.7 0.7 Q7 0.7 7 3.9 Q7 5.6 5.6 6.9 V8 H1.8 V6.9 Q0.4 5.6 0.4 3.9 Q0.4 0.7 3.7 0.7Z" fill="#fff4c0" stroke="#f0b040" stroke-width="1.2"/>
  <rect x="1.9" y="8.2" width="3.6" height="3" rx="1" fill="#7a94b8"/>
  <rect x="2.5" y="8.8" width="2.4" height="1" fill="#e0e8f4"/>
  <path d="M5.4 12.1 L8.7 4.2 L12.1 12.1Z" fill="#f2ac34" stroke="#d48c1c" stroke-width="1" stroke-linejoin="round"/>
  <path d="M8.7 6.6 V9.6 M8.7 10.4 V11.2" stroke="#3a2200" stroke-width="1.1"/>
</svg>
<svg class="ic" style="left:201px;top:259.5px;" width="189" height="4" viewBox="0 0 189 4"><path d="M0 3 L2 1 L4 3 L6 1 L8 3 L10 1 L12 3 L14 1 L16 3 L18 1 L20 3 L22 1 L24 3 L26 1 L28 3 L30 1 L32 3 L34 1 L36 3 L38 1 L40 3 L42 1 L44 3 L46 1 L48 3 L50 1 L52 3 L54 1 L56 3 L58 1 L60 3 L62 1 L64 3 L66 1 L68 3 L70 1 L72 3 L74 1 L76 3 L78 1 L80 3 L82 1 L84 3 L86 1 L88 3 L90 1 L92 3 L94 1 L96 3 L98 1 L100 3 L102 1 L104 3 L106 1 L108 3 L110 1 L112 3 L114 1 L116 3 L118 1 L120 3 L122 1 L124 3 L126 1 L128 3 L130 1 L132 3 L134 1 L136 3 L138 1 L140 3 L142 1 L144 3 L146 1 L148 3 L150 1 L152 3 L154 1 L156 3 L158 1 L160 3 L162 1 L164 3 L166 1 L168 3 L170 1 L172 3 L174 1 L176 3 L178 1 L180 3 L182 1 L184 3 L186 1 L188 3" fill="none" stroke="#ecc020" stroke-width="1.3"/></svg>
<svg class="ic" style="left:69px;top:282.5px;" width="123" height="4" viewBox="0 0 123 4"><path d="M0 3 L2 1 L4 3 L6 1 L8 3 L10 1 L12 3 L14 1 L16 3 L18 1 L20 3 L22 1 L24 3 L26 1 L28 3 L30 1 L32 3 L34 1 L36 3 L38 1 L40 3 L42 1 L44 3 L46 1 L48 3 L50 1 L52 3 L54 1 L56 3 L58 1 L60 3 L62 1 L64 3 L66 1 L68 3 L70 1 L72 3 L74 1 L76 3 L78 1 L80 3 L82 1 L84 3 L86 1 L88 3 L90 1 L92 3 L94 1 L96 3 L98 1 L100 3 L102 1 L104 3 L106 1 L108 3 L110 1 L112 3 L114 1 L116 3 L118 1 L120 3 L122 1" fill="none" stroke="#ecc020" stroke-width="1.3"/></svg>
<!-- OVERVIEW RULER -->
<div class="abs" style="left:1885px;top:129px;width:8px;height:8px;background:#f5c52c;border:1px solid #d0c8a8;box-sizing:border-box;"></div>
<div class="abs" style="left:1885px;top:249px;width:9px;height:5px;background:#fdf1c4;border:1px solid #f0d470;box-sizing:border-box;"></div>
<div class="abs" style="left:1885px;top:272px;width:9px;height:5px;background:#fdf1c4;border:1px solid #f0d470;box-sizing:border-box;"></div>
<!-- SCROLL ARROWS -->
<svg class="ic" style="left:1864px;top:134px;" width="13" height="11" viewBox="0 0 13 11"><path d="M1 6.300 L6.500 1 L12 6.300 V10.200 L6.500 5.100 L1 10.200Z" fill="#b9b9b9"/></svg>
<svg class="ic" style="left:1864px;top:949px;" width="13" height="11" viewBox="0 0 13 11"><path d="M1 4.700 L6.500 10 L12 4.700 V0.800 L6.500 5.900 L1 0.800Z" fill="#b9b9b9"/></svg>
<svg class="ic" style="left:75px;top:974px;" width="11" height="13" viewBox="0 0 11 13"><path d="M6.300 1 L1 6.500 L6.300 12 H10.200 L5.100 6.500 L10.200 1Z" fill="#b9b9b9"/></svg>
<svg class="ic" style="left:1838px;top:974px;" width="11" height="13" viewBox="0 0 11 13"><path d="M4.700 1 L10 6.500 L4.700 12 H0.800 L5.900 6.500 L0.800 1Z" fill="#b9b9b9"/></svg>
<!-- STATUS BAR -->
<div class="abs" style="left:626px;top:994px;width:1px;height:22px;background:#a8a8a8;"></div>
<div class="abs" style="left:820px;top:994px;width:1px;height:22px;background:#a8a8a8;"></div>
<div class="abs" style="left:1005px;top:994px;width:1px;height:22px;background:#a8a8a8;"></div>
<div class="abs" style="left:1190px;top:994px;width:1px;height:5px;background:#a8a8a8;"></div>
<div class="hd" style="left:1499px;top:1000px;"></div>
<div class="hd" style="left:1893px;top:1003px;height:11px;"></div>
<svg class="ic" style="left:1903px;top:999px;" width="11" height="17" viewBox="0 0 11 17">
  <path d="M5.5 1 Q10 1 10 5.5 Q10 8 7.8 10.5 V12 H3.2 V10.5 Q1 8 1 5.5 Q1 1 5.5 1Z" fill="#fff8d8" stroke="#f2b440" stroke-width="1.3"/>
  <rect x="3.2" y="12.2" width="4.6" height="3.6" rx="1" fill="#5a7090"/>
  <rect x="4" y="13" width="3" height="1.2" fill="#d0dcec"/>
</svg>
<!-- status blur -->
<div class="abs" style="left:1043px;top:996px;width:73px;height:13px;background:#dcdcdc;border-radius:12px 0 0 0;"></div>
<div class="abs" style="left:1062px;top:996px;width:18px;height:13px;background:#d2d4d6;"></div>
<div class="abs" style="left:1098px;top:996px;width:18px;height:13px;background:#c4c6c6;"></div>
<div class="abs" style="left:1188px;top:996px;width:270px;height:13px;background:#d0d0d0;"></div>
<div class="abs" style="left:1188px;top:996px;width:18px;height:13px;background:#dededc;"></div>
<div class="abs" style="left:1206px;top:996px;width:18px;height:13px;background:#b8bab8;"></div>
<div class="abs" style="left:1224px;top:996px;width:18px;height:13px;background:#dcdcdc;"></div>
<div class="abs" style="left:1242px;top:996px;width:36px;height:13px;background:#c6c6c4;"></div>
<div class="abs" style="left:1278px;top:996px;width:18px;height:13px;background:#e2e2de;"></div>
<div class="abs" style="left:1296px;top:996px;width:72px;height:13px;background:#c8cacc;"></div>
<div class="abs" style="left:1368px;top:996px;width:18px;height:13px;background:#dcdcd8;"></div>
<div class="abs" style="left:1386px;top:996px;width:36px;height:13px;background:#c2c4c4;"></div>
<div class="abs" style="left:1422px;top:996px;width:18px;height:13px;background:#d8dada;"></div>
<div class="abs" style="left:1440px;top:996px;width:18px;height:13px;background:#bcbcbc;"></div>
<div class="abs" style="left:1043px;top:1008px;width:431px;height:11px;background:#b2b2b2;border-radius:0 14px 0 0;"></div>
<div class="abs" style="left:1098px;top:1008px;width:18px;height:11px;background:#a2a6a4;"></div>
<div class="abs" style="left:1206px;top:1008px;width:18px;height:11px;background:#a0a2a0;"></div>
<div class="abs" style="left:1278px;top:1008px;width:54px;height:11px;background:#a8aaac;"></div>
<div class="abs" style="left:1386px;top:1008px;width:36px;height:11px;background:#a6a6a6;"></div>
<!--/I3-->
<!-- TITLE -->
<span class="ui" id="t1a" style="left:31px;top:6px;">eclipse-workspace</span>
<span class="ui" id="t1b" style="left:31px;top:6px;">-</span>
<span class="ui" id="t1c" style="left:31px;top:6px;">Data</span>
<span class="ui" id="t1d" style="left:31px;top:6px;">Definition</span>
<span class="ui" id="t1e" style="left:31px;top:6px;">ZCDS_ASSOCIATIONS</span>
<span class="ui" id="t1f" style="left:31px;top:6px;">[ZBD]</span>
<span class="ui" id="t1g" style="left:31px;top:6px;">-</span>
<span class="ui" id="t2" style="left:893px;top:6px;">se IDE</span>

<!-- MENU -->
<span class="ui" id="m1" style="left:7px;top:37px;"><u>F</u>ile</span>
<span class="ui" id="m2" style="left:51px;top:37px;"><u>E</u>dit</span>
<span class="ui" id="m3" style="left:99px;top:37px;"><u>S</u>ource Code</span>
<span class="ui" id="m4" style="left:221px;top:37px;"><u>N</u>avigate</span>
<span class="ui" id="m5" style="left:313px;top:37px;">Se<u>a</u>rch</span>
<span class="ui" id="m6" style="left:384px;top:37px;"><u>P</u>roject</span>
<span class="ui" id="m7" style="left:458px;top:37px;"><u>R</u>un</span>
<span class="ui" id="m8" style="left:506px;top:37px;"><u>W</u>indow</span>
<span class="ui" id="m9" style="left:591px;top:37px;"><u>H</u>elp</span>


<!-- TABS -->
<span class="ui" id="tab1" style="left:48px;top:99px;">[ZBD] ZPDA_FETCH_STOCK_LIST</span>
<span class="ui" id="tab2" style="left:372px;top:99px;">[ZBD] ZCDS_ASSOCIATIONS</span>

<!-- STATUS -->
<span class="ui" id="s1" style="left:634px;top:994px;">Read-Only</span>
<span class="ui" id="s2" style="left:828px;top:994px;">Smart Insert</span>
<span class="ui" id="s3" style="left:1014px;top:994px;">19 :</span>
<span class="ui" id="wm" style="left:1763px;top:987.5px;color:#989898;font-size:20px;text-shadow:1px 1px 0 rgba(255,255,255,.7);">CSDN @rogerix4</span>

<!-- CODE -->
<pre class="ln">1
2
3
4
5
6
7
8
9
10
11
12
13
14
15
16
17
18
19
20
21
22
23
24
25
26</pre>
<pre class="code"><span class="an">@AbapCatalog.sqlViewName: 'ZCDS_ASSO_01'</span>
<span class="an">@AbapCatalog.compiler.compareFilter: true</span>
<span class="an">@AbapCatalog.preserveKey: true</span>
<span class="an">@AccessControl.authorizationCheck: #CHECK</span>
<span class="an">@EndUserText.label: 'cds view with association'</span>
<span class="kw">define view</span> <span class="wv">ZCDS_ASSOCIATIONS</span> <span class="kw">as select from</span> spfli <span class="kw">as</span> t1
<span class="kw wv">association</span> <span class="kw">[</span><span class="nu">1</span><span class="kw">]</span> <span class="kw">to</span> sflight <span class="kw">as</span> _sflight
    <span class="kw">on $projection.</span>carrid <span class="kw">=</span> _sflight<span class="kw">.</span>carrid
<span class="kw">{</span>
<span class="kw">key</span> t1<span class="kw">.</span>carrid<span class="kw">,</span>
    t1<span class="kw">.</span>connid<span class="kw">,</span>
    t1<span class="kw">.</span>countryfr<span class="kw">,</span>
    t1<span class="kw">.</span>cityfrom<span class="kw">,</span>
    t1<span class="kw">.</span>airpfrom<span class="kw">,</span>
    t1<span class="kw">.</span>countryto<span class="kw">,</span>
    t1<span class="kw">.</span>cityto<span class="kw">,</span>
    t1<span class="kw">.</span>airpto<span class="kw">,</span>
    t1<span class="kw">.</span>fltime<span class="kw">,</span>
    t1<span class="kw">.</span>deptime<span class="kw">,</span>
    t1<span class="kw">.</span>arrtime<span class="kw">,</span>
    t1<span class="kw">.</span>distance<span class="kw">,</span>
    t1<span class="kw">.</span>distid<span class="kw">,</span>

    _sflight
<span class="kw">}</span>
</pre>
<div id="caret" class="abs"></div>
</body>
</html>
